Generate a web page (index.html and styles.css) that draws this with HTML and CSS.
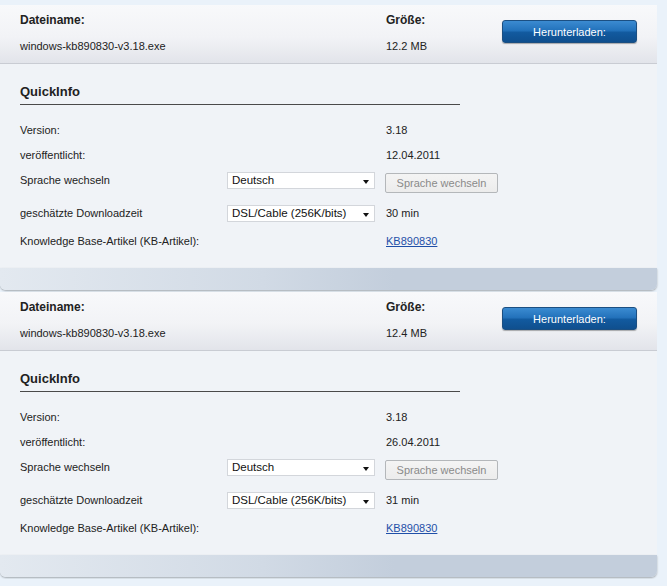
FILE: index.html
```html
<!DOCTYPE html>
<html>
<head>
    <title>Download</title>
    <link rel="stylesheet" href="styles.css">
</head>
<body>
    <div class="panel">
        <div class="file-head">
            <span class="b">Dateiname:</span>
            <span class="b">Größe:</span>
            <button class="dl">Herunterladen:</button>
            <span>windows-kb890830-v3.18.exe</span>
            <span>12.2 MB</span>
        </div>
        <div class="info">
            <div class="info-title">QuickInfo</div>
            <div class="row r1"><span>Version:</span><span></span><span>3.18</span></div>
            <div class="row r2"><span>veröffentlicht:</span><span></span><span>12.04.2011</span></div>
            <div class="row r3">
                <span>Sprache wechseln</span>
                <div class="select">Deutsch<i class="arrow"></i></div>
                <button class="lang">Sprache wechseln</button>
            </div>
            <div class="row r4">
                <span>geschätzte Downloadzeit</span>
                <div class="select">DSL/Cable (256K/bits)<i class="arrow"></i></div>
                <span>30 min</span>
            </div>
            <div class="row r5"><span>Knowledge Base-Artikel (KB-Artikel):</span><span></span><a href="#">KB890830</a></div>
        </div>
        <div class="foot"></div>
    </div>
    <div class="panel">
        <div class="file-head">
            <span class="b">Dateiname:</span>
            <span class="b">Größe:</span>
            <button class="dl">Herunterladen:</button>
            <span>windows-kb890830-v3.18.exe</span>
            <span>12.4 MB</span>
        </div>
        <div class="info">
            <div class="info-title">QuickInfo</div>
            <div class="row r1"><span>Version:</span><span></span><span>3.18</span></div>
            <div class="row r2"><span>veröffentlicht:</span><span></span><span>26.04.2011</span></div>
            <div class="row r3">
                <span>Sprache wechseln</span>
                <div class="select">Deutsch<i class="arrow"></i></div>
                <button class="lang">Sprache wechseln</button>
            </div>
            <div class="row r4">
                <span>geschätzte Downloadzeit</span>
                <div class="select">DSL/Cable (256K/bits)<i class="arrow"></i></div>
                <span>31 min</span>
            </div>
            <div class="row r5"><span>Knowledge Base-Artikel (KB-Artikel):</span><span></span><a href="#">KB890830</a></div>
        </div>
        <div class="foot"></div>
    </div>
</body>
</html>
```

FILE: styles.css
```css
body {
    margin: 0; padding-top: 5px;
    background-color: #eaf2fa;
    font-family: "Liberation Sans", Arial, sans-serif;
    font-size: 11px; color: #222;
}
.panel { width: 657px; margin-bottom: 2px; }
.file-head {
    display: grid;
    grid-template-columns: 366px 116px 135px;
    grid-template-rows: 20px 20px;
    row-gap: 6px; align-items: center;
    height: 51px; padding: 5px 20px 2px;
    background: linear-gradient(#f8f9fb, #f2f3f6 55%, #e2e4ea);
    border-bottom: 1px solid #c9ccd3;
}
.b { font-weight: bold; font-size: 12px; }
.dl {
    grid-column: 3; grid-row: 1 / span 2;
    align-self: start; margin-top: 10px;
    width: 135px; height: 23px; padding: 0;
    font-family: inherit; font-size: 11px; color: #fff;
    background: linear-gradient(#3b8bd1, #2372bb 45%, #125a9f 55%, #0f4f8e);
    border: 1px solid #1b4f82; border-radius: 3px;
    box-shadow: 0 1px 1px rgba(0,0,0,0.3);
}
.info { background-color: #f0f3f7; height: 185px; padding: 0 20px 19px; }
.info-title {
    width: 440px; padding: 21px 0 5px;
    font-weight: bold; font-size: 13px; line-height: 14px;
    border-bottom: 1px solid #4a4a4a; margin-bottom: 12px;
}
.row {
    display: grid; grid-template-columns: 207px 159px auto;
    align-items: center;
}
.r1, .r2 { height: 25px; }
.r3 { height: 26px; }
.r4 { height: 40px; }
.r5 { height: 16px; }
.select {
    position: relative; box-sizing: border-box;
    width: 148px; height: 17px; padding-left: 4px;
    background: #fff; border: 1px solid #d3d6db;
    font-size: 11.5px; line-height: 15px; color: #111;
}
.arrow {
    position: absolute; right: 5px; top: 7px;
    border-left: 3.5px solid transparent; border-right: 3.5px solid transparent;
    border-top: 4px solid #111;
}
.lang {
    align-self: end; margin-left: -1px;
    width: 113px; height: 20px; padding: 0;
    font-family: inherit; font-size: 11px; color: #8a8a8a;
    background: linear-gradient(#f4f4f4, #ececec);
    border: 1px solid #b4b7ba; border-radius: 2px;
    justify-self: start;
}
a { color: #1f4fa8; }
.foot {
    height: 22px;
    background: linear-gradient(to right, #e3e9f0, #d1dae5 40%, #c3cedc 60%, #c3cedc);
    border-radius: 0 0 6px 6px;
    box-shadow: 0 1px 2px rgba(0,0,0,0.3);
}
```
